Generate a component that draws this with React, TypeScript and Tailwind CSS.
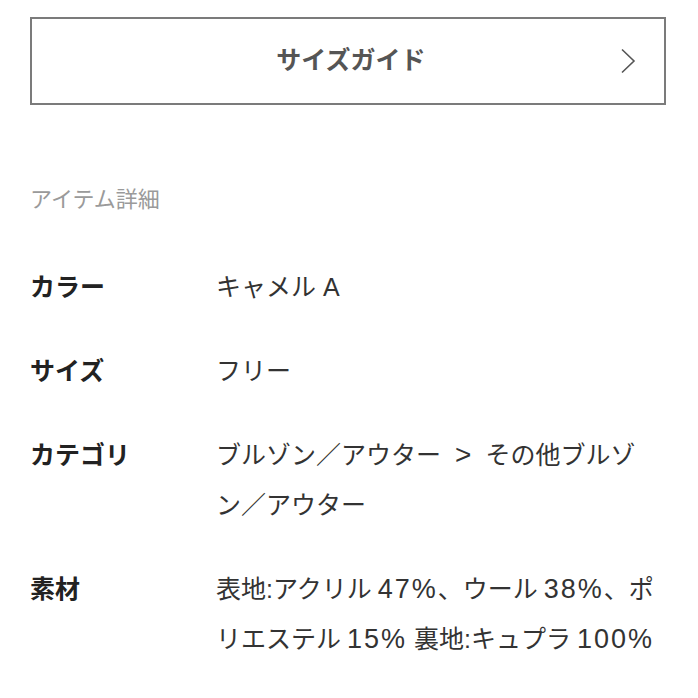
import type { ReactNode } from "react";

const font = {
  fontFamily: '"Liberation Sans", "Noto Sans CJK JP", sans-serif',
};

// Latin numbers in the reference are set wider than the kana around them
function N({ children }: { children: ReactNode }) {
  return <span className="ml-[6px] text-[27px] tracking-[2px]">{children}</span>;
}

type Row = { label: string; lines: ReactNode[] };

const rows: Row[] = [
  { label: "カラー", lines: ["キャメル A"] },
  { label: "サイズ", lines: ["フリー"] },
  {
    label: "カテゴリ",
    lines: [
      <>
        ブルゾン／アウター<span className="mx-[14px] text-[28px]">&gt;</span>その他ブルゾ
      </>,
      "ン／アウター",
    ],
  },
  {
    label: "素材",
    lines: [
      <>
        表地:アクリル<N>47%</N>、ウール<N>38%</N>、ポ
      </>,
      <>
        リエステル<N>15%</N> 裏地:キュプラ<N>100%</N>
      </>,
    ],
  },
];

export default function App() {
  return (
    <div className="min-h-[698px] w-[698px] bg-white pl-[30px] pr-[32px] pt-[17px]" style={font}>
      <button className="flex h-[88px] w-full items-center border-2 border-[#7b7b7b] bg-white">
        <span className="flex-1 pl-[50px] text-center text-[25px] font-bold text-[#555]">サイズガイド</span>
        <svg width="16" height="26" viewBox="0 0 16 26" className="mr-[28px]" fill="none">
          <path d="M2 1.5 L14 13 L2 24.5" stroke="#555" strokeWidth="1.6" />
        </svg>
      </button>

      <h2 className="mt-[80px] text-[22px] leading-[30px] font-normal text-[#9a9a9a]">アイテム詳細</h2>

      <dl className="mt-[47px] flex flex-col gap-[34px]">
        {rows.map((r) => (
          <div key={r.label} className="flex">
            <dt className="w-[186px] shrink-0 text-[25px] leading-[50px] font-bold text-[#222]">{r.label}</dt>
            <dd className="text-[25px] leading-[50px] text-[#333]">
              {r.lines.map((l, i) => (
                <div key={i} className="whitespace-nowrap">{l}</div>
              ))}
            </dd>
          </div>
        ))}
      </dl>
    </div>
  );
}
